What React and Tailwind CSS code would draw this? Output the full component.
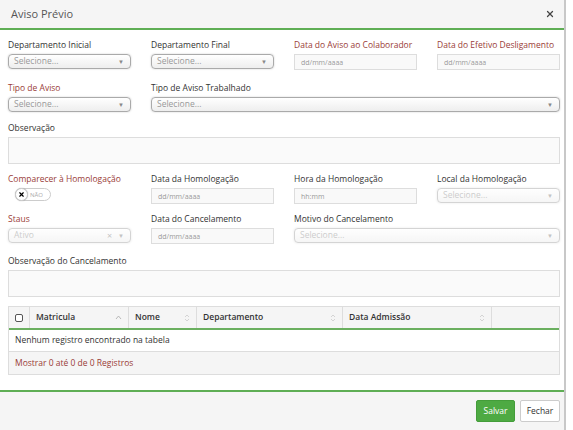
import { X } from 'lucide-react'

const font = { fontFamily: '"Open Sans", "Noto Sans", sans-serif' }

function Label({ children, req = false }) {
  return (
    <div className={`h-[14px] leading-[14px] text-[8.5px] mb-[2px] whitespace-nowrap ${req ? 'text-[#9a3c38]' : 'text-[#333]'}`}>
      {children}
    </div>
  )
}

function Select({ text = 'Selecione...', disabled = false, clear = false }) {
  return (
    <div className={`h-[15px] flex items-center justify-between rounded-[4px] border border-[#aaa] bg-gradient-to-b from-white to-[#eee] shadow-[0_0_2px_#ccc] pl-[5px] pr-[6px] ${disabled ? 'opacity-50' : ''}`}>
      <span className="text-[8.5px] text-[#999] leading-none">{text}</span>
      <span className="flex items-center gap-[6px] text-[#888]">
        {clear && <span className="text-[9px] leading-none">×</span>}
        <span className="text-[6px] leading-none">▼</span>
      </span>
    </div>
  )
}

function Input({ ph = 'dd/mm/aaaa' }) {
  return (
    <div className="h-[16px] flex items-center border border-[#ddd] bg-[#f9f9f9] pl-[6px]">
      <span className="text-[7px] text-[#999] leading-none">{ph}</span>
    </div>
  )
}

function SortIcon() {
  return (
    <svg width="6" height="8" viewBox="0 0 6 8" fill="none" stroke="#ccc" strokeWidth="0.8">
      <path d="M1 3 L3 1 L5 3" />
      <path d="M1 5 L3 7 L5 5" />
    </svg>
  )
}

function Th({ children, w, icon = 'sort', last = false }) {
  return (
    <div className={`flex items-center justify-between px-[6px] h-full ${last ? '' : 'border-r border-[#ddd]'} ${w}`}>
      <span className="text-[8.5px] text-[#333] font-semibold">{children}</span>
      {icon === 'sort' && <SortIcon />}
      {icon === 'up' && (
        <svg width="7" height="5" viewBox="0 0 7 5" fill="none" stroke="#aaa" strokeWidth="0.8">
          <path d="M1 4 L3.5 1 L6 4" />
        </svg>
      )}
    </div>
  )
}

export default function App() {
  return (
    <div className="w-[573px] h-[430px] flex bg-white overflow-hidden" style={font}>
      <div className="w-[566px] h-full flex flex-col border-r-2 border-[#c8c8c8]">
        {/* header */}
        <div className="h-[30px] flex items-center justify-between bg-[#f5f5f5] border-b-2 border-[#5fae55] pl-[11px] pr-[9px] shrink-0">
          <span className="text-[11px] text-[#555]">Aviso Prévio</span>
          <X size={10} strokeWidth={3} className="text-[#444]" />
        </div>

        {/* body */}
        <div className="flex-1 pl-[8px] pr-[4px] pt-[8px]">
          <div className="grid grid-cols-4 gap-x-[20px]">
            <div>
              <Label>Departamento Inicial</Label>
              <Select />
            </div>
            <div>
              <Label>Departamento Final</Label>
              <Select />
            </div>
            <div>
              <Label req>Data do Aviso ao Colaborador</Label>
              <Input />
            </div>
            <div>
              <Label req>Data do Efetivo Desligamento</Label>
              <Input />
            </div>
          </div>

          <div className="grid grid-cols-4 gap-x-[20px] mt-[11px]">
            <div>
              <Label req>Tipo de Aviso</Label>
              <Select />
            </div>
            <div className="col-span-3">
              <Label>Tipo de Aviso Trabalhado</Label>
              <Select />
            </div>
          </div>

          <div className="mt-[9px]">
            <Label>Observação</Label>
            <div className="h-[27px] border border-[#ddd] bg-[#fafafa]" />
          </div>

          <div className="grid grid-cols-4 gap-x-[20px] mt-[8px]">
            <div>
              <Label req>Comparecer à Homologação</Label>
              <div className="ml-[7px] w-[36px] h-[13px] rounded-full border border-[#ccc] bg-white flex items-center">
                <div className="w-[13px] h-[13px] -ml-px rounded-full border border-[#ccc] bg-white flex items-center justify-center shadow-[0_0_1px_#999]">
                  <X size={7} strokeWidth={4} className="text-black" />
                </div>
                <span className="text-[6px] text-[#aaa] ml-[2px] leading-none">NÃO</span>
              </div>
            </div>
            <div>
              <Label>Data da Homologação</Label>
              <Input />
            </div>
            <div>
              <Label>Hora da Homologação</Label>
              <Input ph="hh:mm" />
            </div>
            <div>
              <Label>Local da Homologação</Label>
              <Select disabled />
            </div>
          </div>

          <div className="grid grid-cols-4 gap-x-[20px] mt-[8px]">
            <div>
              <Label req>Staus</Label>
              <Select text="Ativo" disabled clear />
            </div>
            <div>
              <Label>Data do Cancelamento</Label>
              <Input />
            </div>
            <div className="col-span-2">
              <Label>Motivo do Cancelamento</Label>
              <Select disabled />
            </div>
          </div>

          <div className="mt-[10px]">
            <Label>Observação do Cancelamento</Label>
            <div className="h-[27px] border border-[#ddd] bg-[#fafafa]" />
          </div>

          {/* table */}
          <div className="mt-[9px] border border-[#ddd]">
            <div className="h-[23px] flex bg-[#f5f5f5] border-b-2 border-[#6aaf5f]">
              <div className="w-[21px] flex items-center justify-center border-r border-[#ddd]">
                <div className="w-[8px] h-[8px] border border-[#555] rounded-[2px] bg-white" />
              </div>
              <Th w="w-[99px]" icon="up">Matricula</Th>
              <Th w="w-[68px]">Nome</Th>
              <Th w="w-[146px]">Departamento</Th>
              <Th w="w-[149px]">Data Admissão</Th>
              <div className="flex-1" />
            </div>
            <div className="h-[22px] flex items-center px-[6px] border-b border-[#ddd] bg-white">
              <span className="text-[8.5px] text-[#333]">Nenhum registro encontrado na tabela</span>
            </div>
            <div className="h-[22px] flex items-center px-[6px] bg-[#f5f5f5]">
              <span className="text-[8.5px] text-[#9a3c38]">Mostrar 0 até 0 de 0 Registros</span>
            </div>
          </div>
        </div>

        {/* footer */}
        <div className="h-[40px] shrink-0 flex items-center justify-end gap-[5px] bg-[#f5f5f5] border-t-2 border-[#5fae55] pr-[4px]">
          <button className="w-[39px] h-[22px] bg-[#4eaa43] border border-[#449d3a] rounded-[2px] text-white text-[8.5px]">Salvar</button>
          <button className="w-[40px] h-[22px] bg-white border border-[#ccc] rounded-[2px] text-[#333] text-[8.5px]">Fechar</button>
        </div>
      </div>
    </div>
  )
}
